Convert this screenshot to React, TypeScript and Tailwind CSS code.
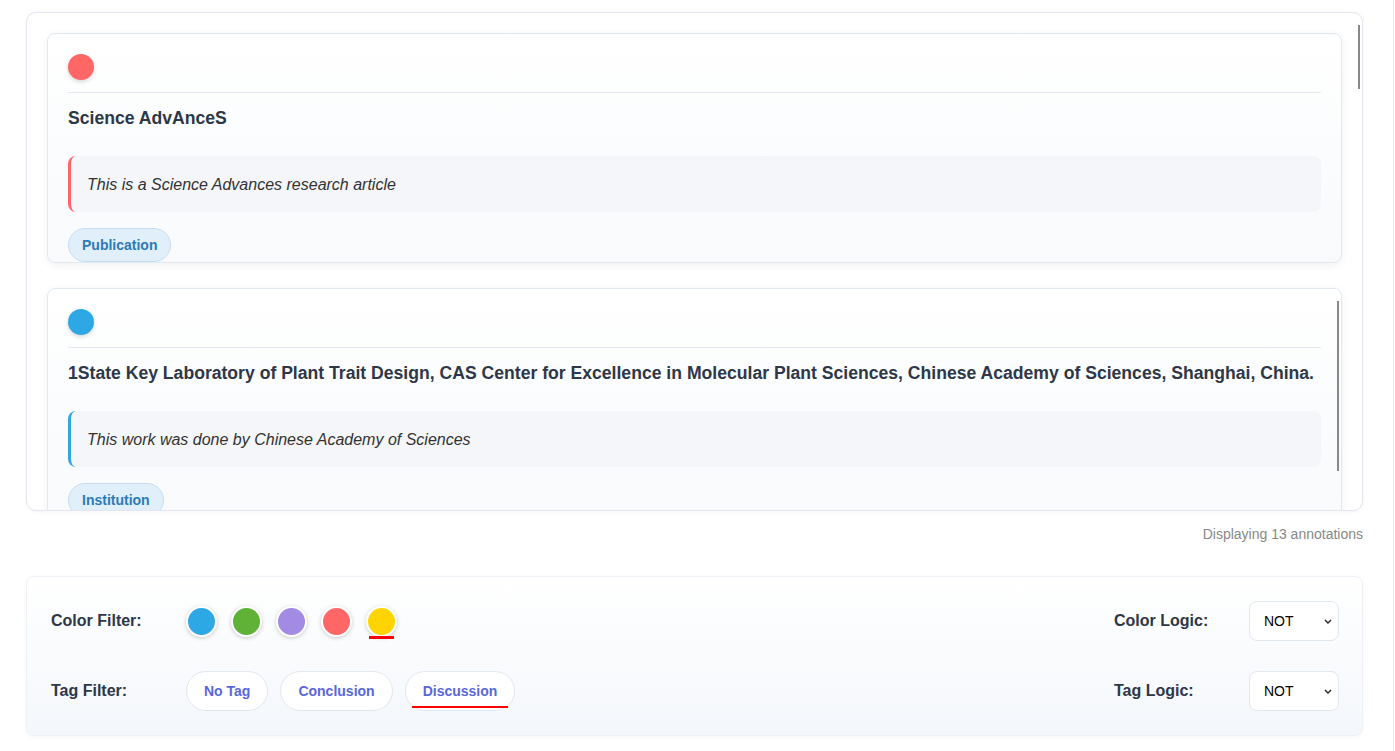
import React from 'react';

interface Annotation {
  color: string;
  title: string;
  comment: string;
  tag: string;
  scrollThumb?: boolean;
}

const annotations: Annotation[] = [
  {
    color: '#ff6666',
    title: 'Science AdvAnceS',
    comment: 'This is a Science Advances research article',
    tag: 'Publication',
  },
  {
    color: '#2ea8e5',
    title:
      '1State Key Laboratory of Plant Trait Design, CAS Center for Excellence in Molecular Plant Sciences, Chinese Academy of Sciences, Shanghai, China.',
    comment: 'This work was done by Chinese Academy of Sciences',
    tag: 'Institution',
    scrollThumb: true,
  },
];

const filterColors = ['#2ea8e5', '#5fb236', '#a28ae5', '#ff6666', '#ffd400'];
const filterTags = ['No Tag', 'Conclusion', 'Discussion'];

function AnnotationCard({ color, title, comment, tag, scrollThumb }: Annotation) {
  return (
    <div className="relative max-h-[230px] shrink-0 overflow-hidden rounded-lg border border-[#e2e8f0] bg-linear-to-b from-white to-[#f8fafc] px-5 pt-5 shadow-[0_2px_8px_rgba(0,0,0,0.06)]">
      {/* Header with colour dot */}
      <div className="border-b border-[#e2e8f0] pb-3">
        <div className="h-[26px] w-[26px] rounded-full shadow-[0_2px_4px_rgba(0,0,0,0.15)]" style={{ backgroundColor: color }} />
      </div>

      <h3 className="mt-3 text-[17.6px] font-bold leading-[26px] text-[#2d3748]">{title}</h3>

      <div
        className="mt-[25px] rounded-lg border-l-[3px] bg-[#f4f6f9] pb-[15px] pl-4 pr-4 pt-[17px] text-[16px] italic leading-6 text-[#333]"
        style={{ borderLeftColor: color }}
      >
        {comment}
      </div>

      <div className="mt-4 flex">
        <span className="rounded-full border border-[#c6ddf1] bg-[#e1effa] px-[13px] py-[6px] text-[14px] font-bold leading-5 text-[#2b7bb9]">
          {tag}
        </span>
      </div>

      {scrollThumb && <div className="absolute right-[2px] top-[12px] h-[170px] w-[2px] bg-[#888]" />}
    </div>
  );
}

function LogicSelect() {
  return (
    <div className="relative">
      <select
        defaultValue="NOT"
        className="h-10 w-[90px] appearance-none rounded-lg border border-[#e2e8f0] bg-white pl-[14px] pr-5 text-[14px] text-black"
      >
        <option value="AND">AND</option>
        <option value="OR">OR</option>
        <option value="NOT">NOT</option>
      </select>
      <svg
        className="pointer-events-none absolute right-[7px] top-[18px]"
        width="8"
        height="5"
        viewBox="0 0 8 5"
        fill="none"
        stroke="#222"
        strokeWidth="1.4"
      >
        <polyline points="1,1 4,4 7,1" />
      </svg>
    </div>
  );
}

export default function App() {
  return (
    <div className="min-h-[751px] w-[1394px] border-r border-[#e6eaf0] bg-white pl-[26px] pr-[30px] pt-3 font-['Liberation_Sans',Arial,sans-serif]">
      {/* Annotation list */}
      <div className="relative h-[499px] overflow-hidden rounded-[10px] border border-[#e3e6ee] bg-white p-5 shadow-[0_1px_4px_rgba(0,0,0,0.04)]">
        <div className="flex flex-col gap-[25px]">
          {annotations.map((a) => (
            <AnnotationCard key={a.title} {...a} />
          ))}
        </div>
        <div className="absolute right-[2px] top-[12px] h-[64px] w-[2px] bg-[#888]" />
      </div>

      <div className="mt-[13px] text-right text-[14px] leading-5 text-[#888]">Displaying 13 annotations</div>

      {/* Filters */}
      <div className="mt-8 flex flex-col gap-[30px] rounded-lg border border-[#eef1f6] bg-linear-to-b from-white to-[#f4f7fb] pb-6 pl-6 pr-[23px] pt-6 shadow-[0_1px_4px_rgba(0,0,0,0.04)]">
        <div className="flex h-10 items-center justify-between">
          <div className="flex items-center gap-[15px]">
            <span className="w-[120px] text-[16px] font-bold text-[#2d3748]">Color Filter:</span>
            <div className="flex items-center gap-[14px]">
              {filterColors.map((c) => (
                <button
                  key={c}
                  className="relative h-[31px] w-[31px] rounded-full border-2 border-white shadow-[0_1px_4px_rgba(0,0,0,0.2)]"
                  style={{ backgroundColor: c }}
                >
                  {c === '#ffd400' && (
                    <span className="absolute -bottom-[4px] left-[1px] right-[1px] h-[3px] bg-[#ff0000]" />
                  )}
                </button>
              ))}
            </div>
          </div>
          <div className="flex items-center gap-[15px]">
            <span className="w-[120px] text-[16px] font-bold text-[#2d3748]">Color Logic:</span>
            <LogicSelect />
          </div>
        </div>

        <div className="flex h-10 items-center justify-between">
          <div className="flex items-center gap-[15px]">
            <span className="w-[120px] text-[16px] font-bold text-[#2d3748]">Tag Filter:</span>
            <div className="flex items-center gap-3">
              {filterTags.map((t) => (
                <button
                  key={t}
                  className="relative rounded-full border border-[#e2e8f0] bg-white px-[17px] py-[9px] text-[14px] font-bold leading-5 text-[#5a67d8]"
                >
                  {t}
                  {t === 'Discussion' && (
                    <span className="absolute bottom-[2px] left-[6px] right-[6px] h-[2px] bg-[#ff0000]" />
                  )}
                </button>
              ))}
            </div>
          </div>
          <div className="flex items-center gap-[15px]">
            <span className="w-[120px] text-[16px] font-bold text-[#2d3748]">Tag Logic:</span>
            <LogicSelect />
          </div>
        </div>
      </div>
    </div>
  );
}
